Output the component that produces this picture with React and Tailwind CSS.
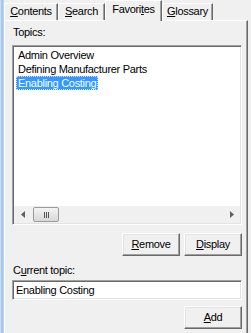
import React from "react";

const font = { fontFamily: '"Liberation Sans", Arial, sans-serif' };

function U({ children }) {
  return <span className="underline underline-offset-[1px]">{children}</span>;
}

function Tab({ children, selected, w }) {
  if (selected) {
    return (
      <div
        className={`${w} h-[21px] -mb-[1px] relative z-10 bg-[#f0f0f0] border-t border-l border-white border-r border-r-[#696969] shadow-[inset_-1px_0_0_#a0a0a0] flex items-start justify-center pt-[2px]`}
      >
        {children}
      </div>
    );
  }
  return (
    <div
      className={`${w} h-[17px] bg-[#f0f0f0] border-t border-l border-white border-r border-r-[#696969] shadow-[inset_-1px_0_0_#a0a0a0] flex items-start justify-center pt-[1px]`}
    >
      {children}
    </div>
  );
}

function Button({ children, className = "" }) {
  return (
    <div
      className={`h-[23px] bg-[#f0f0f0] border border-t-white border-l-white border-r-[#696969] border-b-[#696969] shadow-[inset_-1px_-1px_0_#a0a0a0,inset_1px_1px_0_#e3e3e3] flex items-center justify-center text-black ${className}`}
    >
      {children}
    </div>
  );
}

function Arrow({ dir }) {
  return (
    <div className="w-[17px] h-full flex items-center justify-center">
      <svg width="4" height="7" viewBox="0 0 4 7">
        {dir === "left" ? (
          <path d="M4 0 L0 3.5 L4 7 Z" fill="#606060" />
        ) : (
          <path d="M0 0 L4 3.5 L0 7 Z" fill="#606060" />
        )}
      </svg>
    </div>
  );
}

export default function App() {
  return (
    <div
      className="w-[251px] h-[333px] overflow-hidden bg-[#f0f0f0] flex text-[11px] leading-[13px] tracking-[-0.3px] text-black"
      style={font}
    >
      <div className="w-[4px] h-full bg-gradient-to-r from-[#dbe8f5] via-[#9dbfe2] to-[#c7dcf0] shrink-0" />
      <div className="flex-1 flex flex-col">
        <div className="h-[20px] flex items-end shrink-0">
          <Tab w="w-[54px]">
            <span>
              <U>C</U>ontents
            </span>
          </Tab>
          <Tab w="w-[47px]">
            <span>
              <U>S</U>earch
            </span>
          </Tab>
          <Tab w="w-[57px]" selected>
            <span>
              Favori<U>t</U>es
            </span>
          </Tab>
          <Tab w="w-[51px]">
            <span>
              <U>G</U>lossary
            </span>
          </Tab>
        </div>
        <div className="w-[244px] flex-1 border-t border-l border-white border-r border-r-[#696969] shadow-[inset_-1px_0_0_#a0a0a0] pl-[7px] pr-[5px] flex flex-col">
          <div className="h-[13px] mt-[5px] pl-[1px]">Topics:</div>
          <div className="h-[180px] mt-[6px] bg-white border border-t-[#a0a0a0] border-l-[#a0a0a0] border-r-white border-b-white shadow-[inset_1px_1px_0_#696969,inset_-1px_-1px_0_#e3e3e3] p-[1px] flex flex-col">
            <div className="flex-1 pl-[2px] pt-[1px]">
              <div className="h-[14px] flex items-center pl-[2px]">Admin Overview</div>
              <div className="h-[14px] flex items-center pl-[2px]">Defining Manufacturer Parts</div>
              <div className="h-[14px] flex items-center">
                <span className="h-[14px] bg-[#3399ff] text-white px-[1px] flex items-center border border-dotted border-[#cce4ff]">
                  Enabling Costing
                </span>
              </div>
            </div>
            <div className="h-[17px] bg-[#f0f0f0] flex items-center shrink-0">
              <Arrow dir="left" />
              <div className="flex-1 h-full flex items-center">
                <div className="ml-[2px] w-[26px] h-[15px] rounded-[2px] border border-[#9b9b9b] bg-gradient-to-b from-[#f4f4f4] to-[#d8d8d8] flex items-center justify-center gap-[1px]">
                  <div className="w-[1px] h-[6px] bg-[#555]" />
                  <div className="w-[1px] h-[6px] bg-[#555]" />
                  <div className="w-[1px] h-[6px] bg-[#555]" />
                </div>
              </div>
              <Arrow dir="right" />
            </div>
          </div>
          <div className="flex justify-end gap-[4px] mt-[8px]">
            <Button className="w-[58px]">
              <span>
                <U>R</U>emove
              </span>
            </Button>
            <Button className="w-[58px]">
              <span>
                <U>D</U>isplay
              </span>
            </Button>
          </div>
          <div className="h-[13px] mt-[8px] pl-[1px]">
            C<U>u</U>rrent topic:
          </div>
          <div className="h-[20px] mt-[3px] bg-white border border-t-[#a0a0a0] border-l-[#a0a0a0] border-r-white border-b-white shadow-[inset_1px_1px_0_#696969,inset_-1px_-1px_0_#e3e3e3] flex items-center pl-[3px]">
            Enabling Costing
          </div>
          <div className="flex justify-end mt-[6px]">
            <Button className="w-[58px]">
              <span>
                <U>A</U>dd
              </span>
            </Button>
          </div>
        </div>
      </div>
    </div>
  );
}
